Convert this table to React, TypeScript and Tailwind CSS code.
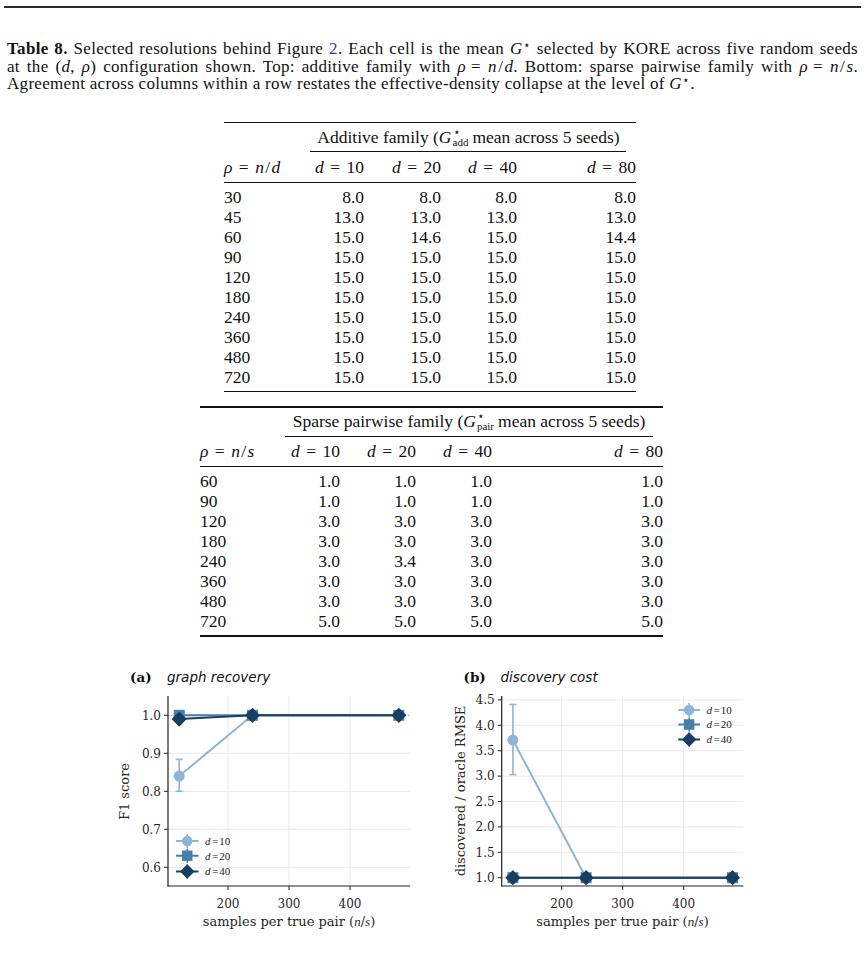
import React from "react";

const SERIF = { fontFamily: '"Liberation Serif", "DejaVu Serif", serif' };

const C10 = "#8fb4d6";
const C20 = "#4a7eaa";
const C40 = "#173f62";

function Eq({ l, r }: { l: React.ReactNode; r: React.ReactNode }) {
  return (
    <span className="whitespace-nowrap">
      {l}
      <span className="inline-block mx-[0.3em] w-[0.7em] text-center">=</span>
      {r}
    </span>
  );
}

const I = ({ children }: { children: React.ReactNode }) => <span className="italic">{children}</span>;

// n/d style fraction written inline, with the slightly wider math slash
function Ratio({ a, b }: { a: string; b: string }) {
  return (
    <>
      <I>{a}</I>
      <span className="mx-[0.08em]">/</span>
      <I>{b}</I>
    </>
  );
}

// G with a star above and a small subscript below, like G^*_add
function Gstar({ sub }: { sub: string }) {
  return (
    <span className="whitespace-nowrap">
      <I>G</I>
      <span className="inline-flex flex-col items-start align-[7px] ml-[1px] mr-[4px]">
        <span className="text-[12px] leading-[10px]">⋆</span>
        <span className="text-[11px] leading-[11px]">{sub}</span>
      </span>
    </span>
  );
}

const Star = () => <sup className="text-[0.7em] top-[-0.42em]">⋆</sup>;

const T1_COLS = "grid grid-cols-[89px_51px_77px_76px_119px]";
const T2_COLS = "grid grid-cols-[87px_53px_76px_76px_171px]";

const table1: [string, string[]][] = [
  ["30", ["8.0", "8.0", "8.0", "8.0"]],
  ["45", ["13.0", "13.0", "13.0", "13.0"]],
  ["60", ["15.0", "14.6", "15.0", "14.4"]],
  ["90", ["15.0", "15.0", "15.0", "15.0"]],
  ["120", ["15.0", "15.0", "15.0", "15.0"]],
  ["180", ["15.0", "15.0", "15.0", "15.0"]],
  ["240", ["15.0", "15.0", "15.0", "15.0"]],
  ["360", ["15.0", "15.0", "15.0", "15.0"]],
  ["480", ["15.0", "15.0", "15.0", "15.0"]],
  ["720", ["15.0", "15.0", "15.0", "15.0"]],
];

const table2: [string, string[]][] = [
  ["60", ["1.0", "1.0", "1.0", "1.0"]],
  ["90", ["1.0", "1.0", "1.0", "1.0"]],
  ["120", ["3.0", "3.0", "3.0", "3.0"]],
  ["180", ["3.0", "3.0", "3.0", "3.0"]],
  ["240", ["3.0", "3.4", "3.0", "3.0"]],
  ["360", ["3.0", "3.0", "3.0", "3.0"]],
  ["480", ["3.0", "3.0", "3.0", "3.0"]],
  ["720", ["5.0", "5.0", "5.0", "5.0"]],
];

function DataTable({
  cols,
  width,
  marginLeft,
  ruleTrim,
  group,
  rhoVar,
  rows,
}: {
  cols: string;
  width: string;
  marginLeft: string;
  ruleTrim: string;
  group: React.ReactNode;
  rhoVar: string;
  rows: [string, string[]][];
}) {
  return (
    <div className={`${width} ${marginLeft} text-[17.5px] text-[#111]`}>
      <div className="h-[1.5px] bg-[#111]" />
      <div className={`${cols} h-[28px] items-center leading-[20px]`}>
        <div />
        <div className="col-span-4 text-center pr-[12px] whitespace-nowrap">{group}</div>
      </div>
      <div className={cols}>
        <div />
        <div className={`col-span-4 h-px bg-[#111] ${ruleTrim}`} />
      </div>
      <div className={`${cols} h-[29.5px] items-center`}>
        <div className="whitespace-nowrap">
          <Eq l={<I>ρ</I>} r={<Ratio a="n" b={rhoVar} />} />
        </div>
        {["10", "20", "40", "80"].map((d) => (
          <div key={d} className="text-right whitespace-nowrap">
            <Eq l={<I>d</I>} r={d} />
          </div>
        ))}
      </div>
      <div className="h-px bg-[#111]" />
      <div className="py-[4px]">
        {rows.map(([label, vals]) => (
          <div key={label} className={`${cols} h-[20px] items-center leading-[20px]`}>
            <div>{label}</div>
            {vals.map((v, i) => (
              <div key={i} className="text-right">
                {v}
              </div>
            ))}
          </div>
        ))}
      </div>
      <div className="h-[1.5px] bg-[#111]" />
    </div>
  );
}

type Pt = [number, number];

function Marker({ kind, x, y, color, s = 1 }: { kind: string; x: number; y: number; color: string; s?: number }) {
  if (kind === "circle") return <circle cx={x} cy={y} r={5.5 * s} fill={color} />;
  if (kind === "square")
    return <rect x={x - 5.5 * s} y={y - 5.5 * s} width={11 * s} height={11 * s} fill={color} />;
  const h = 6.6 * s;
  return (
    <polygon
      points={`${x},${y - h} ${x + h},${y} ${x},${y + h} ${x - h},${y}`}
      fill={color}
      strokeLinejoin="round"
      stroke={color}
      strokeWidth={1.4}
    />
  );
}

function Series({ pts, color, kind }: { pts: Pt[]; color: string; kind: string }) {
  return (
    <g>
      <polyline points={pts.map((p) => p.join(",")).join(" ")} fill="none" stroke={color} strokeWidth={2} />
      {pts.map(([x, y], i) => (
        <Marker key={i} kind={kind} x={x} y={y} color={color} />
      ))}
    </g>
  );
}

function ErrBar({ x, y1, y2, color }: { x: number; y1: number; y2: number; color: string }) {
  return (
    <g stroke={color} strokeWidth={1.6}>
      <line x1={x} y1={y1} x2={x} y2={y2} />
      <line x1={x - 3.5} y1={y1} x2={x + 3.5} y2={y1} />
      <line x1={x - 3.5} y1={y2} x2={x + 3.5} y2={y2} />
    </g>
  );
}

function Legend({ x0, x1, tx, ys }: { x0: number; x1: number; tx: number; ys: number[] }) {
  const items = [
    { c: C10, k: "circle", d: "10" },
    { c: C20, k: "square", d: "20" },
    { c: C40, k: "diamond", d: "40" },
  ];
  const mx = (x0 + x1) / 2;
  return (
    <g>
      {items.map((it, i) => (
        <g key={it.d}>
          <line x1={x0} y1={ys[i]} x2={x1} y2={ys[i]} stroke={it.c} strokeWidth={2} />
          <line x1={mx} y1={ys[i] - 7} x2={mx} y2={ys[i] + 7} stroke={it.c} strokeWidth={1.6} />
          <Marker kind={it.k} x={mx} y={ys[i]} color={it.c} s={0.95} />
          <text x={tx} y={ys[i] + 3.8} fontSize={11} fill="#222" style={SERIF}>
            <tspan fontStyle="italic">d</tspan>
            <tspan dx={1.5}>=</tspan>
            <tspan dx={1}>{it.d}</tspan>
          </text>
        </g>
      ))}
    </g>
  );
}

const TICK_FONT = { fontFamily: '"DejaVu Serif", serif' };
const SANS = { fontFamily: '"DejaVu Sans", sans-serif' };

function Axes({
  left,
  right,
  top,
  bottom,
  xMap,
  yMap,
  yTicks,
  oneY,
}: {
  left: number;
  right: number;
  top: number;
  bottom: number;
  xMap: (v: number) => number;
  yMap: (v: number) => number;
  yTicks: number[];
  oneY: number;
}) {
  return (
    <g>
      {yTicks.map((t) => (
        <line key={t} x1={left} x2={right} y1={yMap(t)} y2={yMap(t)} stroke="#e9e9e9" strokeWidth={1} />
      ))}
      {[200, 300, 400].map((t) => (
        <line key={t} x1={xMap(t)} x2={xMap(t)} y1={top} y2={bottom} stroke="#e9e9e9" strokeWidth={1} />
      ))}
      <line x1={left} x2={right} y1={oneY} y2={oneY} stroke="#a0a0a0" strokeWidth={0.9} strokeDasharray="1.2 2" />
      <line x1={left} x2={left} y1={top} y2={bottom + 0.6} stroke="#222" strokeWidth={1.2} />
      <line x1={left - 0.6} x2={right} y1={bottom} y2={bottom} stroke="#222" strokeWidth={1.2} />
      {yTicks.map((t) => (
        <g key={t}>
          <line x1={left - 4} x2={left} y1={yMap(t)} y2={yMap(t)} stroke="#222" strokeWidth={1} />
          <text x={left - 7} y={yMap(t) + 4.3} textAnchor="end" fontSize={12} fill="#262626" style={TICK_FONT}>
            {t.toFixed(1)}
          </text>
        </g>
      ))}
      {[200, 300, 400].map((t) => (
        <g key={t}>
          <line x1={xMap(t)} x2={xMap(t)} y1={bottom} y2={bottom + 4} stroke="#222" strokeWidth={1} />
          <text x={xMap(t)} y={bottom + 21.5} textAnchor="middle" fontSize={12} fill="#262626" style={TICK_FONT}>
            {t}
          </text>
        </g>
      ))}
      <text x={(left + right) / 2} y={bottom + 39.5} textAnchor="middle" fontSize={13} fill="#262626" style={TICK_FONT}>
        samples per true pair (
        <tspan fontStyle="italic" style={SERIF}>
          n
        </tspan>
        /
        <tspan fontStyle="italic" style={SERIF}>
          s
        </tspan>
        )
      </text>
    </g>
  );
}

function ChartA() {
  const x = (v: number) => 228 + (v - 200) * 0.61;
  const y = (v: number) => 715.3 + (1 - v) * 380;
  const xs = [120, 240, 480].map(x);
  return (
    <svg width={330} height={265} viewBox="100 665 330 265">
      <text x={130} y={682} fontSize={13.5} fontWeight="bold" fill="#111" style={TICK_FONT}>
        (a)
      </text>
      <text x={167} y={682} fontSize={13.5} fontStyle="italic" fill="#111" style={SANS}>
        graph recovery
      </text>
      <Axes left={168} right={410} top={696} bottom={886} xMap={x} yMap={y} yTicks={[1.0, 0.9, 0.8, 0.7, 0.6]} oneY={y(1)} />
      <text transform="translate(129 791.5) rotate(-90)" textAnchor="middle" fontSize={13} fill="#262626" style={TICK_FONT}>
        F1 score
      </text>
      <ErrBar x={xs[0]} y1={y(0.884)} y2={y(0.8)} color={C10} />
      <Series color={C10} kind="circle" pts={[[xs[0], y(0.84)], [xs[1], y(1)], [xs[2], y(1)]]} />
      <Series color={C20} kind="square" pts={[[xs[0], y(1)], [xs[1], y(1)], [xs[2], y(1)]]} />
      <Series color={C40} kind="diamond" pts={[[xs[0], y(0.99)], [xs[1], y(1)], [xs[2], y(1)]]} />
      <Legend x0={176} x1={198.5} tx={205} ys={[841, 855.7, 871.5]} />
    </svg>
  );
}

function ChartB() {
  const x = (v: number) => 561.7 + (v - 200) * 0.61;
  const y = (v: number) => 877.7 - (v - 1) * 50.8;
  const xs = [120, 240, 480].map(x);
  return (
    <svg width={330} height={265} viewBox="440 665 330 265">
      <text x={463.5} y={682} fontSize={13.5} fontWeight="bold" fill="#111" style={TICK_FONT}>
        (b)
      </text>
      <text x={500.5} y={682} fontSize={13.5} fontStyle="italic" fill="#111" style={SANS}>
        discovery cost
      </text>
      <Axes
        left={501.7}
        right={743.3}
        top={696}
        bottom={886}
        xMap={x}
        yMap={y}
        yTicks={[4.5, 4.0, 3.5, 3.0, 2.5, 2.0, 1.5, 1.0]}
        oneY={y(1)}
      />
      <text transform="translate(465 791) rotate(-90)" textAnchor="middle" fontSize={13} fill="#262626" style={TICK_FONT}>
        discovered / oracle RMSE
      </text>
      <ErrBar x={xs[0]} y1={y(4.41)} y2={y(3.03)} color={C10} />
      <Series color={C10} kind="circle" pts={[[xs[0], y(3.71)], [xs[1], y(1)], [xs[2], y(1)]]} />
      <Series color={C20} kind="square" pts={[[xs[0], y(1)], [xs[1], y(1)], [xs[2], y(1)]]} />
      <Series color={C40} kind="diamond" pts={[[xs[0], y(1)], [xs[1], y(1)], [xs[2], y(1)]]} />
      <Legend x0={678.3} x1={700} tx={706.5} ys={[710, 724.5, 739.5]} />
    </svg>
  );
}

export default function App() {
  return (
    <div className="w-[865px] h-[954px] bg-white overflow-hidden text-[#111]" style={SERIF}>
      <div className="mx-[4px] mt-[6px] h-[2px] bg-[#2a2a2a]" />

      <div className="mt-[32px] px-[7px] text-[17px] leading-[17.5px] tracking-[0.3px]">
        <div className="text-justify [text-align-last:justify] whitespace-nowrap">
          <span className="font-bold">Table 8.</span> Selected resolutions behind Figure{" "}
          <span className="text-[#2546b8]">2</span>. Each cell is the mean <I>G</I>
          <Star /> selected by KORE across five random seeds
        </div>
        <div className="text-justify [text-align-last:justify] whitespace-nowrap">
          at the (<I>d</I>, <I>ρ</I>) configuration shown. Top: additive family with{" "}
          <Eq l={<I>ρ</I>} r={<Ratio a="n" b="d" />} />. Bottom: sparse pairwise family with{" "}
          <Eq l={<I>ρ</I>} r={<Ratio a="n" b="s" />} />.
        </div>
        <div className="whitespace-nowrap">
          Agreement across columns within a row restates the effective-density collapse at the level of <I>G</I>
          <Star />.
        </div>
      </div>

      <div className="mt-[29px]">
        <DataTable
          cols={T1_COLS}
          width="w-[412px]"
          marginLeft="ml-[224px]"
          ruleTrim="mr-[10px] -ml-[3px]"
          rhoVar="d"
          rows={table1}
          group={<>Additive family (<Gstar sub="add" />mean across 5 seeds)</>}
        />
      </div>

      <div className="mt-[14px]">
        <DataTable
          cols={T2_COLS}
          width="w-[463px]"
          marginLeft="ml-[200px]"
          ruleTrim="mr-[10px] -ml-[2px]"
          rhoVar="s"
          rows={table2}
          group={<>Sparse pairwise family (<Gstar sub="pair" />mean across 5 seeds)</>}
        />
      </div>

      <div className="mt-[28px] flex pl-[100px] gap-[10px]">
        <ChartA />
        <ChartB />
      </div>
    </div>
  );
}
